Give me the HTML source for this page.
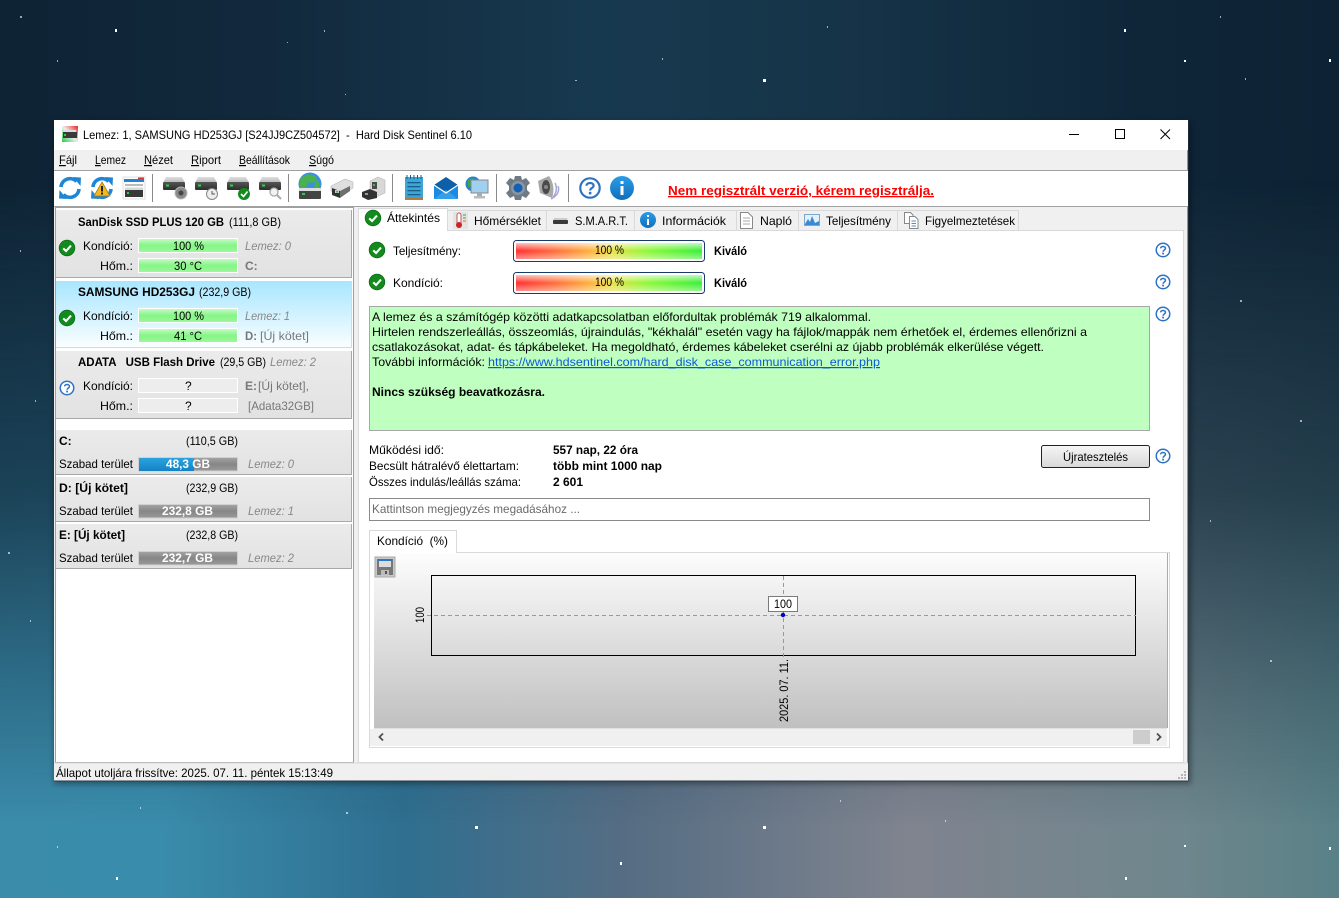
<!DOCTYPE html>
<html><head><meta charset="utf-8"><title>Hard Disk Sentinel</title>
<style>
html,body{margin:0;padding:0;width:1339px;height:898px;overflow:hidden;background:#10283b}
#b1,#b2{position:absolute;left:0;top:0;width:1339px;height:898px}
#b1{background:linear-gradient(90deg,#0e2334 0,#12293d 20%,#17394f 45%,#163448 62%,#0f2639 85%,#0d2233 100%)}
#b2{background:linear-gradient(90deg,#3b8cab 0,#3a8cac 12%,#2f6f90 30%,#566d83 47%,#80848f 68%,#6f868d 88%,#598187 100%);
-webkit-mask-image:linear-gradient(180deg,transparent 20%,rgba(0,0,0,.3) 55%,rgba(0,0,0,.75) 78%,#000 92%);mask-image:linear-gradient(180deg,transparent 20%,rgba(0,0,0,.3) 55%,rgba(0,0,0,.75) 78%,#000 92%)}
svg{position:absolute;left:0;top:0}
text{font-family:"Liberation Sans",sans-serif;font-size:12px;fill:#000;white-space:pre}
.b{font-weight:bold}
.g{fill:#777}
.i{font-style:italic;fill:#888}
.gb{font-weight:bold;fill:#777}
.w{font-weight:bold;fill:#fff}
</style></head><body>
<div id="b1"></div><div id="b2"></div>
<svg width="1339" height="898" viewBox="0 0 1339 898" xmlns="http://www.w3.org/2000/svg">
<defs>
<filter id="sh" x="-5%" y="-5%" width="110%" height="110%"><feGaussianBlur stdDeviation="3"/></filter>
<linearGradient id="grn" x1="0" y1="0" x2="0" y2="1"><stop offset="0" stop-color="#c8fcc8"/><stop offset=".5" stop-color="#86f586"/><stop offset="1" stop-color="#9cf89c"/></linearGradient>
<linearGradient id="sel" x1="0" y1="0" x2="0" y2="1"><stop offset="0" stop-color="#a8e6ff"/><stop offset="1" stop-color="#fbfeff"/></linearGradient>
<linearGradient id="item" x1="0" y1="0" x2="0" y2="1"><stop offset="0" stop-color="#ebebeb"/><stop offset="1" stop-color="#e2e2e2"/></linearGradient>
<linearGradient id="gbar" x1="0" y1="0" x2="0" y2="1"><stop offset="0" stop-color="#a4a4a4"/><stop offset=".5" stop-color="#868686"/><stop offset="1" stop-color="#9a9a9a"/></linearGradient>
<linearGradient id="bbar" x1="0" y1="0" x2="0" y2="1"><stop offset="0" stop-color="#2aa3e0"/><stop offset="1" stop-color="#1482c4"/></linearGradient>
<linearGradient id="mh"><stop offset="0" stop-color="#ff2f2f"/><stop offset=".2" stop-color="#ff6a3a"/><stop offset=".38" stop-color="#ffaa3a"/><stop offset=".52" stop-color="#e8e040"/><stop offset=".7" stop-color="#90f838"/><stop offset="1" stop-color="#38ee38"/></linearGradient>
<linearGradient id="mv" x1="0" y1="0" x2="0" y2="1"><stop offset="0" stop-color="#fff" stop-opacity=".7"/><stop offset=".5" stop-color="#fff" stop-opacity="0"/><stop offset="1" stop-color="#fff" stop-opacity=".45"/></linearGradient>
<linearGradient id="chart" x1="0" y1="0" x2="0" y2="1"><stop offset="0" stop-color="#fdfdfd"/><stop offset="1" stop-color="#c0c0c0"/></linearGradient>
<linearGradient id="btn" x1="0" y1="0" x2="0" y2="1"><stop offset="0" stop-color="#f6f6f6"/><stop offset="1" stop-color="#d8d8d8"/></linearGradient>
<linearGradient id="ti" x1="0" y1="1" x2="1" y2="0"><stop offset="0" stop-color="#22cc44"/><stop offset=".5" stop-color="#eeeeee"/><stop offset="1" stop-color="#ee2222"/></linearGradient>
<linearGradient id="drv" x1="0" y1="0" x2="0" y2="1"><stop offset="0" stop-color="#555"/><stop offset="1" stop-color="#2e2e2e"/></linearGradient>
<linearGradient id="drt" x1="0" y1="0" x2="0" y2="1"><stop offset="0" stop-color="#e0e0e0"/><stop offset="1" stop-color="#b4b4b4"/></linearGradient>
<linearGradient id="blu" x1="0" y1="0" x2="0" y2="1"><stop offset="0" stop-color="#2b9ce6"/><stop offset="1" stop-color="#0f6fbd"/></linearGradient>
<symbol id="ok" viewBox="0 0 18 18" overflow="visible"><circle cx="9" cy="9" r="8.3" fill="#138a1e" stroke="#0b6a12" stroke-width=".8"/><path d="M5 9.4L8 12.2L13.2 6.4" fill="none" stroke="#fff" stroke-width="2.2"/></symbol>
<symbol id="hp" viewBox="0 0 18 18" overflow="visible"><circle cx="9" cy="9" r="7.6" fill="#fff" stroke="#2f72c4" stroke-width="1.7"/><path d="M6.3 7.2C6.3 4.4 11.8 4.4 11.8 7.2C11.8 9 9.1 9 9.1 11" fill="none" stroke="#2f72c4" stroke-width="1.7"/><rect x="8.1" y="12" width="2" height="2" fill="#2f72c4"/></symbol>
<symbol id="hd" viewBox="0 0 22 13" overflow="visible"><path d="M3 0H19L22 6H0Z" fill="url(#drt)"/><rect y="5" width="22" height="8" rx="1" fill="url(#drv)"/><rect x="3" y="7.5" width="3" height="2" fill="#2ad04a"/></symbol>
<symbol id="sy" viewBox="-12 -12 24 24" overflow="visible"><path d="M-9 -1A9 9 0 0 1 6.5 -6.5" fill="none" stroke="#1e86d6" stroke-width="3.6"/><path d="M3 -11L11 -10.5L10.5 -2Z" fill="#1e86d6"/><path d="M9 1A9 9 0 0 1 -6.5 6.5" fill="none" stroke="#1e86d6" stroke-width="3.6"/><path d="M-3 11L-11 10.5L-10.5 2Z" fill="#1e86d6"/></symbol>
</defs>

<!-- stars -->
<g fill="#fff">
<rect x="115" y="29" width="2" height="3"/><rect x="1124" y="29" width="2" height="3"/><rect x="763" y="79" width="3" height="3"/><rect x="1329" y="59" width="2" height="3"/><rect x="1184" y="60" width="2" height="2"/>
<rect x="475" y="826" width="3" height="3"/><rect x="763" y="826" width="3" height="3"/><rect x="620" y="862" width="2" height="3"/><rect x="116" y="877" width="2" height="3"/><rect x="1125" y="877" width="2" height="3"/><rect x="1329" y="847" width="2" height="3"/><rect x="1184" y="845" width="2" height="2"/>
<g opacity=".6"><rect x="20" y="16" width="2" height="2"/><rect x="57" y="60" width="1" height="2"/><rect x="324" y="30" width="1" height="2"/><rect x="287" y="42" width="1" height="1"/><rect x="662" y="58" width="1" height="2"/><rect x="575" y="80" width="2" height="1"/><rect x="827" y="26" width="1" height="2"/><rect x="1220" y="16" width="1" height="2"/><rect x="345" y="94" width="1" height="1"/><rect x="1245" y="78" width="1" height="2"/><rect x="8" y="552" width="2" height="2"/><rect x="30" y="620" width="1" height="2"/><rect x="1240" y="300" width="2" height="2"/><rect x="1300" y="420" width="2" height="2"/><rect x="1210" y="520" width="1" height="2"/><rect x="1270" y="660" width="2" height="2"/><rect x="20" y="250" width="1" height="2"/><rect x="35" y="400" width="1" height="2"/><rect x="346" y="812" width="2" height="2"/><rect x="140" y="807" width="1" height="2"/><rect x="57" y="846" width="1" height="2"/><rect x="840" y="800" width="1" height="2"/><rect x="945" y="820" width="1" height="2"/></g>
</g>

<!-- window -->
<rect x="54" y="122" width="1137" height="662" fill="#000" opacity=".35" filter="url(#sh)"/>
<rect x="54" y="120" width="1134" height="661" fill="#f0f0f0"/>
<path d="M54 781H1188V120" fill="none" stroke="#2c3a44" stroke-width="1"/>
<rect x="54" y="120" width="1134" height="30" fill="#fff"/>
<rect x="54" y="171" width="1134" height="35" fill="#fff"/>
<rect x="54" y="170" width="1134" height="1" fill="#a0a0a0"/>
<rect x="54" y="206" width="1134" height="1" fill="#a0a0a0"/>

<!-- title -->
<rect x="62" y="126" width="16" height="16" fill="url(#ti)"/>
<rect x="63" y="132" width="14" height="6" fill="#3a3a3a"/><rect x="64" y="130" width="12" height="2" fill="#ddd"/><rect x="64" y="134" width="2" height="2" fill="#2ad04a"/>
<text x="83" y="139" textLength="389" lengthAdjust="spacingAndGlyphs">Lemez: 1, SAMSUNG HD253GJ [S24JJ9CZ504572]  -  Hard Disk Sentinel 6.10</text>
<path d="M1069 134.500H1079" stroke="#000"/>
<rect x="1115.500" y="129.500" width="9" height="9" fill="none" stroke="#000"/>
<path d="M1160.500 129.500L1170 139M1170 129.500L1160.500 139" stroke="#000" fill="none"/>

<!-- menu -->
<g>
<text x="59" y="164" textLength="18" lengthAdjust="spacingAndGlyphs"><tspan text-decoration="underline">F</tspan>ájl</text>
<text x="95" y="164" textLength="31" lengthAdjust="spacingAndGlyphs"><tspan text-decoration="underline">L</tspan>emez</text>
<text x="144" y="164" textLength="29" lengthAdjust="spacingAndGlyphs"><tspan text-decoration="underline">N</tspan>ézet</text>
<text x="191" y="164" textLength="30" lengthAdjust="spacingAndGlyphs"><tspan text-decoration="underline">R</tspan>iport</text>
<text x="239" y="164" textLength="51" lengthAdjust="spacingAndGlyphs"><tspan text-decoration="underline">B</tspan>eállítások</text>
<text x="309" y="164" textLength="25" lengthAdjust="spacingAndGlyphs"><tspan text-decoration="underline">S</tspan>úgó</text>
</g>

<!-- toolbar -->
<g fill="#8a8a8a"><rect x="152" y="174" width="1" height="28"/><rect x="288" y="174" width="1" height="28"/><rect x="392" y="174" width="1" height="28"/><rect x="496" y="174" width="1" height="28"/><rect x="568" y="174" width="1" height="28"/></g>
<use href="#sy" x="58" y="176" width="24" height="24"/>
<use href="#sy" x="90" y="176" width="24" height="24"/>
<path d="M102 182L110 196H94Z" fill="#f4b81e" stroke="#a87a10" stroke-width=".8"/><rect x="101" y="186" width="2" height="5.500" fill="#222"/><rect x="101" y="192.500" width="2" height="2" fill="#222"/>
<rect x="123" y="177" width="22" height="22" fill="#fdfdfd" stroke="#ccc" stroke-width=".6"/><rect x="124" y="179" width="20" height="3" fill="#1e86d6"/><rect x="138" y="177.500" width="6" height="1.500" fill="#d33"/><rect x="125" y="184" width="18" height="2" fill="#bbb"/><rect x="125" y="187.500" width="18" height="3" fill="#d8d8d8"/><rect x="125" y="190" width="18" height="7" fill="#383838"/><rect x="127" y="192" width="2" height="2" fill="#2ad04a"/>

<use href="#hd" x="163" y="177" width="22" height="13"/>
<circle cx="181" cy="193" r="6" fill="#8a8a8a" stroke="#bbb"/><circle cx="181" cy="193" r="2.500" fill="#444"/>
<use href="#hd" x="195" y="177" width="22" height="13"/>
<circle cx="212" cy="194" r="5.500" fill="#eee" stroke="#888"/><path d="M212 191V194H215" fill="none" stroke="#555"/>
<use href="#hd" x="227" y="177" width="22" height="13"/>
<circle cx="244" cy="194" r="6" fill="#138a1e"/><path d="M241 194L243.500 196.500L247.500 191.500" fill="none" stroke="#fff" stroke-width="1.600"/>
<use href="#hd" x="259" y="177" width="22" height="13"/>
<circle cx="274" cy="192" r="4" fill="#f2f2f2" stroke="#aaa" stroke-width="1.300"/><path d="M277 195L281 199" stroke="#aaa" stroke-width="2"/>

<circle cx="310" cy="184" r="11.500" fill="#3a90e0"/><path d="M301 178C306 173 313 174 316 177C318 182 312 184 309 182C305 186 307 192 302 190C299 186 299 181 301 178Z" fill="#4ab050"/><path d="M316 180C320 181 320 186 318 190L314 187Z" fill="#4ab050"/>
<rect x="299" y="190" width="22" height="9" rx="1" fill="#444"/><rect x="299" y="188" width="22" height="3" fill="#ddd"/><rect x="302" y="193" width="3" height="2" fill="#2ad04a"/>

<path d="M331 186L345 179L353 182V188L340 195L331 191Z" fill="#dedede" stroke="#aaa" stroke-width=".5"/><path d="M332 188L340 191V198L332 195Z" fill="#333"/><path d="M340 191L350 186V191L340 198Z" fill="#6e6e6e"/><rect x="335" y="190" width="4" height="3" fill="#ccc"/><rect x="336" y="191" width="2" height="1.500" fill="#2ac04a"/>
<path d="M370 181L378 177L385 180V193L376 197L370 194Z" fill="#d8d8d8" stroke="#aaa" stroke-width=".5"/><rect x="372" y="182" width="5" height="7" fill="#4a4a4a"/><rect x="373" y="184" width="2" height="2" fill="#2ac04a"/><path d="M362 192L370 189L377 192V198L368 200L362 197Z" fill="#333"/><rect x="365" y="193" width="3" height="2" fill="#999"/>

<rect x="405" y="177" width="18" height="22" fill="#3ba6d8"/><rect x="405" y="197" width="18" height="3" fill="#b87a3a"/><g fill="#1a5f88"><rect x="407.500" y="182" width="13" height="1.300"/><rect x="407.500" y="186" width="13" height="1.300"/><rect x="407.500" y="190" width="13" height="1.300"/><rect x="407.500" y="194" width="13" height="1.300"/></g><path d="M407 175V179M410.500 175V179M414 175V179M417.500 175V179M421 175V179" stroke="#1a5f88"/>
<rect x="434" y="185" width="24" height="14" fill="#1c8ae0"/><path d="M434 185L446 177L458 185L446 193Z" fill="#0d5fa8"/><path d="M434 199L446 190L458 199Z" fill="#35a0ea"/><path d="M434 185L446 193L458 185" fill="none" stroke="#fff" stroke-width="1.200"/>
<circle cx="473" cy="184" r="7.500" fill="#2a7fd0"/><path d="M468 180C472 177 476 179 476 182C473 185 470 185 468 188Z" fill="#3aa84a"/><rect x="471" y="180" width="17" height="13" fill="#9fd0f0" stroke="#888"/><rect x="477" y="193" width="5" height="3" fill="#aaa"/><rect x="474" y="196" width="11" height="2.500" fill="#bbb"/>

<g transform="translate(518,188)"><path d="M-3 -12H3L4 -8L8 -10L12 -5L9 -2V2L12 5L8 10L4 8L3 12H-3L-4 8L-8 10L-12 5L-9 2V-2L-12 -5L-8 -10L-4 -8Z" fill="#6e7a84"/><circle r="7" fill="#8a96a0"/><circle r="4.500" fill="#1360b4"/></g>
<path d="M538 181L549 176Q556 186 552 198L540 193Z" fill="#a8a8a8"/><ellipse cx="546" cy="187" rx="4" ry="7" fill="#4a4a4a"/><circle cx="546" cy="187" r="2" fill="#888"/><path d="M555 183C557 187 557 192 553 197M558 186C560 191 557 196 551 199" fill="none" stroke="#a8a8d8" stroke-width="1.500"/>
<use href="#hp" x="578.500" y="176.500" width="23" height="23"/>
<circle cx="622" cy="188" r="12" fill="url(#blu)"/><rect x="620.500" y="186" width="3" height="9" fill="#fff"/><rect x="620.500" y="181" width="3" height="3" fill="#fff"/>
<text x="668" y="195" class="b" style="fill:#f00;font-size:13px" textLength="266" lengthAdjust="spacingAndGlyphs" text-decoration="underline">Nem regisztrált verzió, kérem regisztrálja.</text>

<!-- left panel -->
<rect x="55.500" y="207.500" width="298" height="555" fill="#fff" stroke="#a0a0a0"/>
<rect x="56" y="210" width="296" height="68" fill="url(#item)"/>
<rect x="56" y="281" width="296" height="67" fill="url(#sel)"/>
<rect x="56" y="351" width="296" height="68" fill="url(#item)"/>
<rect x="56" y="430" width="296" height="45" fill="url(#item)"/>
<rect x="56" y="477" width="296" height="45" fill="url(#item)"/>
<rect x="56" y="524" width="296" height="45" fill="url(#item)"/>
<path d="M351.500 210V277.500H56M351.500 351V418.500H56M351.500 430V474.500H56M351.500 477V521.500H56M351.500 524V568.500H56" fill="none" stroke="#a8a8a8"/>
<path d="M351.500 281V347.500H56" fill="none" stroke="#d8d8d8"/>
<g stroke="#fff" fill="url(#grn)">
<rect x="138.500" y="238.500" width="99" height="14"/><rect x="138.500" y="258.500" width="99" height="14"/>
<rect x="138.500" y="308.500" width="99" height="14"/><rect x="138.500" y="328.500" width="99" height="14"/>
</g>
<g stroke="#fff" fill="#ededed"><rect x="138.500" y="378.500" width="99" height="14"/><rect x="138.500" y="398.500" width="99" height="14"/></g>
<use href="#ok" x="58.500" y="239.500" width="17" height="17"/>
<use href="#ok" x="58.500" y="309.500" width="17" height="17"/>
<use href="#hp" x="59" y="380" width="16" height="16"/>

<text x="78" y="226" class="b" textLength="146" lengthAdjust="spacingAndGlyphs">SanDisk SSD PLUS 120 GB</text><text x="229" y="226" textLength="52" lengthAdjust="spacingAndGlyphs">(111,8 GB)</text>
<text x="83" y="250" textLength="50" lengthAdjust="spacingAndGlyphs">Kondíció:</text><text x="100" y="270" textLength="33" lengthAdjust="spacingAndGlyphs">Hőm.:</text>
<text x="173" y="250" textLength="31" lengthAdjust="spacingAndGlyphs">100 %</text><text x="174" y="270" textLength="28" lengthAdjust="spacingAndGlyphs">30 °C</text>
<text x="245" y="250" class="i" textLength="46" lengthAdjust="spacingAndGlyphs">Lemez: 0</text><text x="245" y="270" class="gb">C:</text>

<text x="78" y="296" class="b" textLength="117" lengthAdjust="spacingAndGlyphs">SAMSUNG HD253GJ</text><text x="199" y="296" textLength="52" lengthAdjust="spacingAndGlyphs">(232,9 GB)</text>
<text x="83" y="320" textLength="50" lengthAdjust="spacingAndGlyphs">Kondíció:</text><text x="100" y="340" textLength="33" lengthAdjust="spacingAndGlyphs">Hőm.:</text>
<text x="173" y="320" textLength="31" lengthAdjust="spacingAndGlyphs">100 %</text><text x="174" y="340" textLength="28" lengthAdjust="spacingAndGlyphs">41 °C</text>
<text x="245" y="320" class="i" textLength="45" lengthAdjust="spacingAndGlyphs">Lemez: 1</text><text x="245" y="340" class="gb" textLength="12" lengthAdjust="spacingAndGlyphs">D:</text><text x="260" y="340" class="g" textLength="49" lengthAdjust="spacingAndGlyphs">[Új kötet]</text>

<text x="78" y="366" class="b" textLength="137" lengthAdjust="spacingAndGlyphs">ADATA   USB Flash Drive</text><text x="220" y="366" textLength="46" lengthAdjust="spacingAndGlyphs">(29,5 GB)</text><text x="270" y="366" class="i" textLength="46" lengthAdjust="spacingAndGlyphs">Lemez: 2</text>
<text x="83" y="390" textLength="50" lengthAdjust="spacingAndGlyphs">Kondíció:</text><text x="100" y="410" textLength="33" lengthAdjust="spacingAndGlyphs">Hőm.:</text>
<text x="185" y="390">?</text><text x="185" y="410">?</text>
<text x="245" y="390" class="gb">E:</text><text x="258" y="390" class="g" textLength="51" lengthAdjust="spacingAndGlyphs">[Új kötet],</text><text x="248" y="410" class="g" textLength="66" lengthAdjust="spacingAndGlyphs">[Adata32GB]</text>

<!-- volumes -->
<g stroke="#d0d0d0"><rect x="138.500" y="457.500" width="99" height="13.500" fill="url(#gbar)"/><rect x="138.500" y="504.500" width="99" height="13.500" fill="url(#gbar)"/><rect x="138.500" y="551.500" width="99" height="13.500" fill="url(#gbar)"/></g>
<rect x="139" y="458" width="55" height="13" fill="url(#bbar)"/>
<text x="59" y="445" class="b">C:</text><text x="186" y="445" textLength="52" lengthAdjust="spacingAndGlyphs">(110,5 GB)</text>
<text x="59" y="468" textLength="74" lengthAdjust="spacingAndGlyphs">Szabad terület</text><text x="166" y="468" class="w" textLength="44" lengthAdjust="spacingAndGlyphs">48,3 GB</text><text x="248" y="468" class="i" textLength="46" lengthAdjust="spacingAndGlyphs">Lemez: 0</text>
<text x="59" y="492" class="b" textLength="69" lengthAdjust="spacingAndGlyphs">D: [Új kötet]</text><text x="186" y="492" textLength="52" lengthAdjust="spacingAndGlyphs">(232,9 GB)</text>
<text x="59" y="515" textLength="74" lengthAdjust="spacingAndGlyphs">Szabad terület</text><text x="162" y="515" class="w" textLength="51" lengthAdjust="spacingAndGlyphs">232,8 GB</text><text x="248" y="515" class="i" textLength="46" lengthAdjust="spacingAndGlyphs">Lemez: 1</text>
<text x="59" y="539" class="b" textLength="66" lengthAdjust="spacingAndGlyphs">E: [Új kötet]</text><text x="186" y="539" textLength="52" lengthAdjust="spacingAndGlyphs">(232,8 GB)</text>
<text x="59" y="562" textLength="74" lengthAdjust="spacingAndGlyphs">Szabad terület</text><text x="162" y="562" class="w" textLength="51" lengthAdjust="spacingAndGlyphs">232,7 GB</text><text x="248" y="562" class="i" textLength="46" lengthAdjust="spacingAndGlyphs">Lemez: 2</text>

<!-- right: content -->
<rect x="358.500" y="230.500" width="825" height="532" fill="#fff" stroke="#d9d9d9"/>
<!-- tabs -->
<g fill="#f0f0f0" stroke="#d9d9d9">
<rect x="447.500" y="210.500" width="99" height="20"/><rect x="546.500" y="210.500" width="88" height="20"/><rect x="634.500" y="210.500" width="102" height="20"/><rect x="736.500" y="210.500" width="62" height="20"/><rect x="798.500" y="210.500" width="99" height="20"/><rect x="897.500" y="210.500" width="121" height="20"/>
</g>
<path d="M358.500 231V208.500H447.500V231" fill="#fff" stroke="#d9d9d9"/>
<use href="#ok" x="364.500" y="209.500" width="17" height="17"/>
<text x="387" y="222" textLength="53" lengthAdjust="spacingAndGlyphs">Áttekintés</text>
<rect x="453" y="212" width="15" height="17" fill="#e4e4e4"/><rect x="457" y="213" width="4" height="12" rx="2" fill="#fff" stroke="#b33" stroke-width=".8"/><circle cx="459" cy="225" r="3" fill="#c22"/><path d="M463 215H466M463 218H466" stroke="#3a3" /><path d="M463 221H466" stroke="#e63"/>
<text x="474" y="225" textLength="67" lengthAdjust="spacingAndGlyphs">Hőmérséklet</text>
<path d="M554 218H567L568 221H553Z" fill="#ccc"/><rect x="553" y="220" width="15" height="4" rx="1" fill="#3a3a3a"/>
<text x="575" y="225" textLength="53" lengthAdjust="spacingAndGlyphs">S.M.A.R.T.</text>
<circle cx="648" cy="220" r="8" fill="url(#blu)"/><rect x="647" y="219" width="2" height="6" fill="#fff"/><rect x="647" y="215" width="2" height="2" fill="#fff"/>
<text x="662" y="225" textLength="64" lengthAdjust="spacingAndGlyphs">Információk</text>
<path d="M740.500 212.500H748L752.500 217V228.500H740.500Z" fill="#fff" stroke="#888"/><path d="M743 218H750M743 221H750M743 224H750" stroke="#aaa"/>
<text x="760" y="225" textLength="32" lengthAdjust="spacingAndGlyphs">Napló</text>
<rect x="804.500" y="214.500" width="15" height="11" fill="#e4f0fa" stroke="#7aa6d0"/><path d="M805 224L808 219L810 222L812 216L815 223L819 221V225H805Z" fill="#3a8ad0"/>
<text x="826" y="225" textLength="65" lengthAdjust="spacingAndGlyphs">Teljesítmény</text>
<path d="M904.500 212.500H910.500L913 215V223.500H904.500Z" fill="#fff" stroke="#888"/><path d="M909.500 216.500H915L918 219.500V228.500H909.500Z" fill="#fff" stroke="#888"/><path d="M911.500 221H916M911.500 223.500H916M911.500 226H916" stroke="#5a8ac0"/>
<text x="925" y="225" textLength="90" lengthAdjust="spacingAndGlyphs">Figyelmeztetések</text>

<!-- status rows -->
<use href="#ok" x="368.500" y="241.500" width="17" height="17"/>
<use href="#ok" x="368.500" y="273.500" width="17" height="17"/>
<text x="393" y="255" textLength="68" lengthAdjust="spacingAndGlyphs">Teljesítmény:</text>
<text x="393" y="287" textLength="50" lengthAdjust="spacingAndGlyphs">Kondíció:</text>
<g>
<rect x="513.500" y="240.500" width="191" height="21" rx="3" fill="#fff" stroke="#1a3a6a"/><rect x="516" y="243" width="186" height="16" fill="url(#mh)"/><rect x="516" y="243" width="186" height="16" fill="url(#mv)"/>
<rect x="513.500" y="272.500" width="191" height="21" rx="3" fill="#fff" stroke="#1a3a6a"/><rect x="516" y="275" width="186" height="16" fill="url(#mh)"/><rect x="516" y="275" width="186" height="16" fill="url(#mv)"/>
</g>
<text x="595" y="254" textLength="29" lengthAdjust="spacingAndGlyphs">100 %</text>
<text x="595" y="286" textLength="29" lengthAdjust="spacingAndGlyphs">100 %</text>
<text x="714" y="255" class="b" textLength="33" lengthAdjust="spacingAndGlyphs">Kiváló</text>
<text x="714" y="287" class="b" textLength="33" lengthAdjust="spacingAndGlyphs">Kiváló</text>
<use href="#hp" x="1155" y="242" width="16" height="16"/>
<use href="#hp" x="1155" y="274" width="16" height="16"/>
<use href="#hp" x="1155" y="306" width="16" height="16"/>
<use href="#hp" x="1155" y="448" width="16" height="16"/>

<!-- info box -->
<rect x="369.500" y="306.500" width="780" height="124" fill="#bfffbf" stroke="#a8a8a8"/>
<text x="372" y="321" textLength="499" lengthAdjust="spacingAndGlyphs">A lemez és a számítógép közötti adatkapcsolatban előfordultak problémák 719 alkalommal.</text>
<text x="372" y="336" textLength="715" lengthAdjust="spacingAndGlyphs">Hirtelen rendszerleállás, összeomlás, újraindulás, "kékhalál" esetén vagy ha fájlok/mappák nem érhetőek el, érdemes ellenőrizni a</text>
<text x="372" y="351" textLength="672" lengthAdjust="spacingAndGlyphs">csatlakozásokat, adat- és tápkábeleket. Ha megoldható, érdemes kábeleket cserélni az újabb problémák elkerülése végett.</text>
<text x="372" y="366" textLength="113" lengthAdjust="spacingAndGlyphs">További információk:</text>
<text x="488" y="366" textLength="392" lengthAdjust="spacingAndGlyphs" text-decoration="underline" style="fill:#0a5ad8">https://www.hdsentinel.com/hard_disk_case_communication_error.php</text>
<text x="372" y="396" class="b" textLength="173" lengthAdjust="spacingAndGlyphs">Nincs szükség beavatkozásra.</text>

<!-- stats -->
<text x="369" y="454" textLength="75" lengthAdjust="spacingAndGlyphs">Működési idő:</text>
<text x="369" y="470" textLength="150" lengthAdjust="spacingAndGlyphs">Becsült hátralévő élettartam:</text>
<text x="369" y="486" textLength="152" lengthAdjust="spacingAndGlyphs">Összes indulás/leállás száma:</text>
<text x="553" y="454" class="b" textLength="85" lengthAdjust="spacingAndGlyphs">557 nap, 22 óra</text>
<text x="553" y="470" class="b" textLength="109" lengthAdjust="spacingAndGlyphs">több mint 1000 nap</text>
<text x="553" y="486" class="b" textLength="30" lengthAdjust="spacingAndGlyphs">2 601</text>
<rect x="1041.500" y="445.500" width="108" height="22" rx="2" fill="url(#btn)" stroke="#222"/>
<text x="1063" y="461" textLength="65" lengthAdjust="spacingAndGlyphs">Újratesztelés</text>
<rect x="369.500" y="498.500" width="780" height="22" fill="#fff" stroke="#8a8a8a"/>
<text x="372" y="513" textLength="208" lengthAdjust="spacingAndGlyphs" style="fill:#6a6a6a">Kattintson megjegyzés megadásához ...</text>

<!-- chart -->
<rect x="369.500" y="552.500" width="800" height="195" fill="#fff" stroke="#d9d9d9"/>
<path d="M369.500 553V530.500H456.500V553" fill="#fff" stroke="#d9d9d9"/>
<text x="377" y="545" textLength="71" lengthAdjust="spacingAndGlyphs">Kondíció  (%)</text>
<rect x="374" y="553" width="793" height="175.500" fill="url(#chart)"/>
<rect x="1167" y="553" width="1" height="175" fill="#aaa"/>
<rect x="375" y="557" width="20" height="20" fill="#c8c8c8" stroke="#aaa"/>
<path d="M377 559H393V575H377Z" fill="#777"/><rect x="378" y="559" width="14" height="2" fill="#2a78c8"/><rect x="379" y="561" width="12" height="6" fill="#ddd"/><rect x="381" y="570" width="8" height="5" fill="#bbb"/><rect x="385" y="571" width="2" height="3" fill="#555"/>
<rect x="431.500" y="575.500" width="704" height="80" fill="none" stroke="#000"/>
<path d="M427 615.500H1136" stroke="#999" stroke-dasharray="4 3"/>
<path d="M783.500 576V660" stroke="#999" stroke-dasharray="4 3"/>
<rect x="768.500" y="596.500" width="29" height="15" fill="#fff"/>
<rect x="768.500" y="596.500" width="29" height="15" fill="none" stroke="#000" stroke-dasharray="1 1" shape-rendering="crispEdges"/>
<text x="774" y="608" textLength="18" lengthAdjust="spacingAndGlyphs">100</text>
<circle cx="783" cy="615" r="2.200" fill="#0000c8"/>
<text transform="translate(424,623) rotate(-90)" textLength="16" lengthAdjust="spacingAndGlyphs">100</text>
<text transform="translate(788,722) rotate(-90)" textLength="63" lengthAdjust="spacingAndGlyphs">2025. 07. 11.</text>
<rect x="370" y="729" width="797" height="17" fill="#f0f0f0"/>
<rect x="1133" y="730" width="17" height="14" fill="#cdcdcd"/>
<path d="M383 733.500L379.500 737L383 740.500M1157 733.500L1160.500 737L1157 740.500" fill="none" stroke="#505050" stroke-width="1.800"/>

<!-- status bar -->
<rect x="54" y="763" width="1134" height="17.500" fill="#f0f0f0"/>
<rect x="54" y="762.500" width="1134" height="1" fill="#d9d9d9"/>
<text x="56" y="777" textLength="277" lengthAdjust="spacingAndGlyphs">Állapot utoljára frissítve: 2025. 07. 11. péntek 15:13:49</text>
<g fill="#b4b4b4"><rect x="1184" y="771" width="2" height="2"/><rect x="1181" y="774" width="2" height="2"/><rect x="1184" y="774" width="2" height="2"/><rect x="1178" y="777" width="2" height="2"/><rect x="1181" y="777" width="2" height="2"/><rect x="1184" y="777" width="2" height="2"/></g>
</svg>
</body></html>
